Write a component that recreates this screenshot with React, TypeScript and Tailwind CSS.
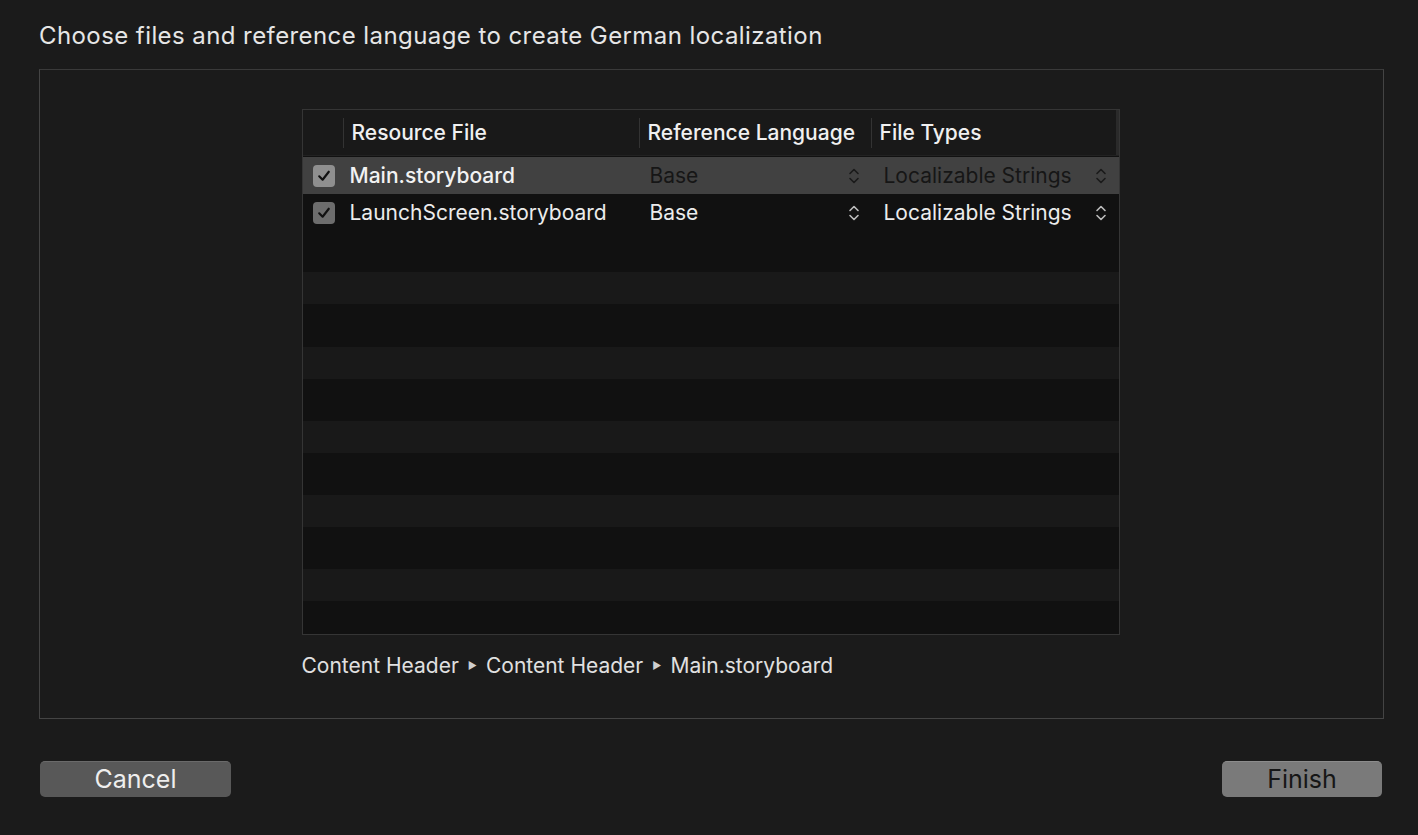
import React from "react";

const font = { fontFamily: "Inter, 'Liberation Sans', sans-serif" };

function UpDown({ color }: { color: string }) {
  return (
    <svg width="12" height="20" viewBox="0 0 12 20" fill="none" stroke={color} strokeWidth="1.6" strokeLinecap="round" strokeLinejoin="round">
      <path d="M2 7.5 L6 3.5 L10 7.5" />
      <path d="M2 12.5 L6 16.5 L10 12.5" />
    </svg>
  );
}

function Check({ bg }: { bg: string }) {
  return (
    <div className={`w-[22px] h-[22px] rounded-[4px] flex items-center justify-center ${bg}`}>
      <svg width="16" height="16" viewBox="0 0 15 15" fill="none" stroke="#111" strokeWidth="2" strokeLinecap="round" strokeLinejoin="round">
        <path d="M3 7.8 L6.2 11 L12 3.5" />
      </svg>
    </div>
  );
}

export default function App() {
  const bands = [41, 32, 43, 32, 42, 32, 42, 32, 42, 32, 30];
  return (
    <div className="w-[1418px] h-[835px] bg-[#1b1b1b] flex flex-col overflow-hidden" style={font}>
      <div className="h-[69px] pl-[39px] pt-[21px] text-[24px] leading-[30px] text-[#e6e6e6] tracking-[0.42px]">
        Choose files and reference language to create German localization
      </div>
      <div className="ml-[39px] w-[1345px] h-[650px] border border-[#444] border-t-[#3a3a3a] flex flex-col items-center pt-[39px]">
        <div className="w-[818px] h-[526px] border border-[#353535] bg-[#111111] flex flex-col -ml-[2px]">
          {/* header */}
          <div className="h-[46px] flex items-center bg-[#191919] border-b border-[#222] text-[21px] text-[#f0f0f0] font-medium">
            <div className="w-[41px] h-full flex items-center justify-end">
              <div className="w-px h-[30px] bg-[#333]" />
            </div>
            <div className="w-[296px] pl-[8px] flex items-center justify-between h-full">
              <span>Resource File</span>
              <div className="w-px h-[30px] bg-[#333]" />
            </div>
            <div className="w-[232px] pl-[8px] flex items-center justify-between h-full">
              <span>Reference Language</span>
              <div className="w-px h-[30px] bg-[#333]" />
            </div>
            <div className="flex-1 pl-[8px] flex items-center h-full">
              <span>File Types</span>
            </div>
            <div className="w-[3px] h-full bg-[#2a2a2a]" />
          </div>
          {/* row 1 selected */}
          <div className="h-[37px] mt-[1px] flex items-center bg-[#414141] text-[21px]">
            <div className="w-[41px] pl-[10px] flex items-center">
              <Check bg="bg-[#8f8f8f]" />
            </div>
            <div className="w-[296px] pl-[6px] text-[#f2f2f2] font-medium">Main.storyboard</div>
            <div className="w-[232px] pl-[10px] pr-[12px] flex items-center justify-between text-[#161616]">
              <span>Base</span>
              <UpDown color="#1a1a1a" />
            </div>
            <div className="flex-1 pl-[12px] pr-[12px] flex items-center justify-between text-[#161616]">
              <span>Localizable Strings</span>
              <UpDown color="#1a1a1a" />
            </div>
          </div>
          {/* row 2 */}
          <div className="h-[37px] flex items-center text-[21px] text-[#ececec]">
            <div className="w-[41px] pl-[10px] flex items-center">
              <Check bg="bg-[#6d6d6d]" />
            </div>
            <div className="w-[296px] pl-[6px]">LaunchScreen.storyboard</div>
            <div className="w-[232px] pl-[10px] pr-[12px] flex items-center justify-between">
              <span>Base</span>
              <UpDown color="#bdbdbd" />
            </div>
            <div className="flex-1 pl-[12px] pr-[12px] flex items-center justify-between">
              <span>Localizable Strings</span>
              <UpDown color="#bdbdbd" />
            </div>
          </div>
          {/* filler stripes */}
          <div className="flex-1 flex flex-col">
            {bands.map((h, i) => (
              <div
                key={i}
                className={i % 2 === 1 ? "bg-[#191919]" : "bg-[#111111]"}
                style={{ height: h }}
              />
            ))}
          </div>
        </div>
        <div className="w-[818px] -ml-[2px] mt-[15px] text-[21px] text-[#e0e0e0] flex items-center gap-[9px]">
          <span>Content Header</span>
          <span className="text-[10px] text-[#cfcfcf]">▶</span>
          <span>Content Header</span>
          <span className="text-[10px] text-[#cfcfcf]">▶</span>
          <span>Main.storyboard</span>
        </div>
      </div>
      <div className="flex justify-between items-start pt-[42px] pl-[40px] pr-[36px]">
        <div className="w-[191px] h-[36px] rounded-[5px] bg-[#585858] border-t border-[#6a6a6a] flex items-center justify-center text-[25px] text-[#eeeeee]">
          Cancel
        </div>
        <div className="w-[160px] h-[36px] rounded-[5px] bg-[#7a7a7a] border-t border-[#8c8c8c] flex items-center justify-center text-[25px] text-[#161616]">
          Finish
        </div>
      </div>
    </div>
  );
}
